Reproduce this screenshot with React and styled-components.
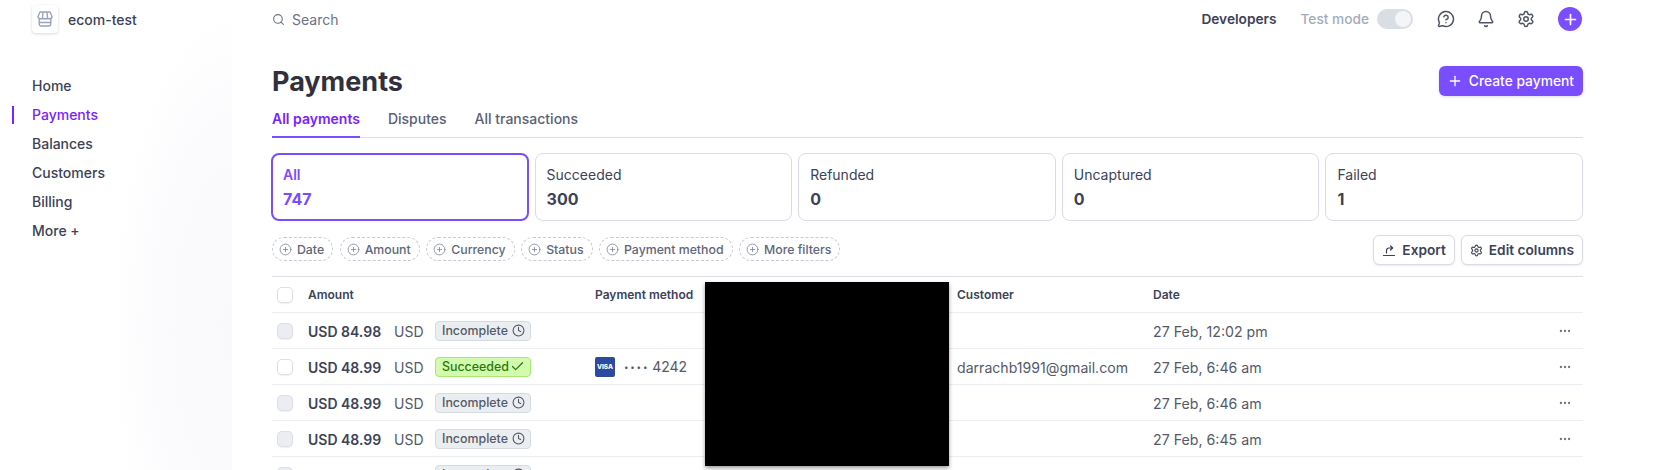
import React from "react";
import styled, { createGlobalStyle } from "styled-components";
import { Search, MessageCircleQuestion, Bell, Settings, Plus, CirclePlus, Clock, Check, Ellipsis } from "lucide-react";

const Global = createGlobalStyle`
  html, body {
    margin: 0;
    height: 470px;
    overflow: hidden;
    background: #fff;
    font-family: Inter, "Noto Sans", sans-serif;
    color: #3c4257;
    -webkit-font-smoothing: antialiased;
  }
`;

const Page = styled.div`
  display: grid;
  grid-template-columns: 232px 1351px;
  height: 470px;
  overflow: hidden;
`;

const Sidebar = styled.aside`
  height: 470px;
  background: radial-gradient(ellipse 120px 320px at 100% 70%, #f9f9fc 0%, #fafafd 50%, #ffffff 100%);
`;

const Brand = styled.div`
  display: flex;
  align-items: center;
  gap: 10px;
  padding: 5px 0 0 32px;
  height: 28px;
  font-size: 14px;
  font-weight: 500;
  color: #3c4257;
`;

const LogoBox = styled.div`
  width: 26px;
  height: 28px;
  display: flex;
  align-items: center;
  justify-content: center;
  border-radius: 4px;
  background: #fff;
  box-shadow: 0 1px 3px rgba(60, 66, 87, 0.2);
`;

const Nav = styled.nav`
  display: flex;
  flex-direction: column;
  gap: 9px;
  margin-top: 43px;
`;

const NavItem = styled.div`
  position: relative;
  padding-left: 32px;
  height: 20px;
  line-height: 20px;
  font-size: 14px;
  font-weight: 500;
  color: ${(p) => (p.$active ? "#7a22ff" : "#3c4257")};

  ${(p) =>
    p.$active &&
    `&::before {
      content: "";
      position: absolute;
      left: 12px;
      top: 1px;
      width: 2px;
      height: 18px;
      background: #7a22ff;
    }`}
`;

const Main = styled.main`
  padding-left: 40px;
  min-width: 0;
`;

const TopBar = styled.header`
  display: flex;
  align-items: center;
  height: 38px;
  font-size: 14px;
  padding-right: 1px;
`;

const SearchBox = styled.div`
  display: flex;
  align-items: center;
  gap: 7px;
  color: #6a7288;
  font-weight: 400;
  margin-right: auto;
`;

const DevLink = styled.span`
  font-weight: 600;
  font-size: 13.7px;
  color: #3c4257;
  margin-right: 24px;
`;

const TestLabel = styled.span`
  font-weight: 500;
  font-size: 13.7px;
  color: #a3acb9;
  margin-right: 8px;
`;

const Toggle = styled.div`
  width: 36px;
  height: 20px;
  box-sizing: border-box;
  padding: 2px;
  border-radius: 10px;
  background: #d9dde4;
  display: flex;
  justify-content: flex-end;
  margin-right: 24px;

  &::after {
    content: "";
    width: 16px;
    height: 16px;
    border-radius: 50%;
    background: #f4f5f8;
  }
`;

const IconRow = styled.div`
  display: flex;
  align-items: center;
  gap: 22px;
  color: #4f5566;
`;

const AddCircle = styled.div`
  width: 24px;
  height: 24px;
  margin-left: 1px;
  border-radius: 50%;
  background: #7a4dff;
  color: #fff;
  display: flex;
  align-items: center;
  justify-content: center;
`;

const TitleRow = styled.div`
  display: flex;
  align-items: center;
  justify-content: space-between;
  margin-top: 24px;
  height: 38px;
`;

const Title = styled.h1`
  margin: 0;
  padding-top: 2px;
  font-size: 27px;
  line-height: 36px;
  font-weight: 700;
  color: #30313d;
`;

const PrimaryButton = styled.button`
  display: flex;
  align-items: center;
  gap: 6px;
  height: 30px;
  padding: 0 9px 0 8px;
  border: 0;
  border-radius: 6px;
  background: #7a4dff;
  color: #fff;
  font: 500 13.8px Inter, sans-serif;
  box-shadow: 0 1px 3px rgba(60, 66, 87, 0.18);
`;

const Tabs = styled.div`
  display: flex;
  gap: 28px;
  margin-top: 6px;
  border-bottom: 1px solid #dcdfe8;
`;

const Tab = styled.div`
  height: 32px;
  box-sizing: border-box;
  line-height: 25px;
  font-size: 14px;
  font-weight: ${(p) => (p.$active ? 600 : 500)};
  color: ${(p) => (p.$active ? "#7a22ff" : "#5a6175")};
  margin-bottom: -1px;
  border-bottom: ${(p) => (p.$active ? "2px solid #7a4dff" : "0")};
`;

const Cards = styled.div`
  display: grid;
  grid-template-columns: repeat(5, 1fr);
  gap: 6px;
  margin-top: 15px;
  margin-left: -1px;
`;

const Card = styled.div`
  height: 68px;
  box-sizing: border-box;
  padding: ${(p) => (p.$active ? "10px 10px" : "11px 11px")};
  border-radius: 8px;
  border: ${(p) => (p.$active ? "2px solid #7a4dff" : "1px solid #d9dce5")};
  color: ${(p) => (p.$active ? "#7a4dff" : "#3c4257")};
`;

const CardLabel = styled.div`
  font-size: 14px;
  line-height: 20px;
  font-weight: ${(p) => (p.$active ? 600 : 400)};
`;

const CardValue = styled.div`
  margin-top: 2px;
  font-size: 16px;
  line-height: 24px;
  font-weight: 700;
`;

const FilterRow = styled.div`
  display: flex;
  align-items: center;
  justify-content: space-between;
  margin-top: 14px;
  height: 30px;
`;

const Filters = styled.div`
  display: flex;
  gap: 6.5px;
  padding-bottom: 2px;
`;

const Filter = styled.div`
  display: flex;
  align-items: center;
  gap: 5px;
  height: 24px;
  box-sizing: border-box;
  padding: 0 8px 0 6px;
  border: 1px dashed #c6cad6;
  border-radius: 12px;
  font-size: 12.3px;
  font-weight: 500;
  color: #5f667a;

  svg {
    color: #7d8499;
  }
`;

const Actions = styled.div`
  display: flex;
  gap: 6px;
`;

const GhostButton = styled.button`
  display: flex;
  align-items: center;
  gap: 6px;
  height: 30px;
  padding: 0 8px;
  background: #fff;
  border: 1px solid #d9dce5;
  border-radius: 6px;
  font: 600 13.7px Inter, sans-serif;
  color: #3c4257;
  box-shadow: 0 1px 2px rgba(60, 66, 87, 0.1);
`;

const Table = styled.div`
  position: relative;
  margin-top: 11px;
  border-top: 1px solid #dcdfe8;
`;

const Row = styled.div`
  display: grid;
  grid-template-columns: 36px 287px 362px 196px 1fr;
  align-items: center;
  height: 36px;
  box-sizing: border-box;
  border-bottom: 1px solid #ebedf2;
  font-size: 14px;
  color: #545969;
`;

const HeadCell = styled.div`
  font-size: 12px;
  font-weight: 600;
  color: #3c4257;
`;

const CheckBox = styled.div`
  width: 14px;
  height: 14px;
  margin-left: 6px;
  border-radius: 4px;
  background: ${(p) => (p.$muted ? "#ebedf2" : "#fff")};
  box-shadow: 0 0 0 1px #dcdfe8, 0 1px 1px 1px rgba(60, 66, 87, 0.08);
`;

const AmountCell = styled.div`
  display: flex;
  align-items: center;
`;

const Amount = styled.span`
  width: 86px;
  padding-top: 2px;
  font-weight: 600;
  color: #3c4257;
`;

const Currency = styled.span`
  width: 41px;
  padding-top: 2px;
`;

const Badge = styled.span`
  display: inline-flex;
  align-items: center;
  justify-content: space-between;
  width: 96px;
  height: 20px;
  box-sizing: border-box;
  padding: 0 5px 0 6px;
  border-radius: 4px;
  font-size: 12.4px;
  font-weight: 500;
  background: ${(p) => (p.$ok ? "#d3fbb0" : "#ebeef1")};
  color: ${(p) => (p.$ok ? "#2a7a05" : "#545969")};
  border: 1px solid ${(p) => (p.$ok ? "#a8e86f" : "#d5dbe1")};
`;

const MethodCell = styled.div`
  display: flex;
  align-items: center;
  gap: 9px;
`;

const VisaMark = styled.span`
  width: 20px;
  height: 20px;
  border-radius: 2px;
  background: #2c4a9e;
  color: #fff;
  display: flex;
  align-items: center;
  justify-content: center;
  font-size: 6.5px;
  font-weight: 800;
`;

const CardNumber = styled.span`
  display: flex;
  align-items: center;
  gap: 3px;
`;

const Dots = styled.span`
  font-size: 8px;
  letter-spacing: 1.8px;
`;

const CustomerCell = styled.div`
  padding-top: 2px;
  font-size: 14.1px;
`;

const DateCell = styled.div`
  display: flex;
  align-items: center;
  justify-content: space-between;
  padding-right: 11px;
`;

const DateText = styled.span`
  padding-top: 2px;
  font-size: 14.2px;
`;

const MoreIcon = styled(Ellipsis)`
  color: #6a7288;
`;

const Redaction = styled.div`
  position: absolute;
  left: 433px;
  top: 5px;
  width: 244px;
  height: 184px;
  background: #000;
  box-shadow: 0 2px 4px rgba(0, 0, 0, 0.4);
`;

const StoreIcon = () => (
  <svg width="18" height="18" viewBox="0 0 18 18" fill="none" stroke="#9aa3ba" strokeWidth="1.4" strokeLinejoin="round">
    <path d="M4 2h10l2 4.5a2 2 0 0 1-2 2.2H4a2 2 0 0 1-2-2.2L4 2z" />
    <path d="M7 2 6.4 8.7M11 2l.6 6.7" />
    <path d="M3.2 8.7V14a2 2 0 0 0 2 2h7.6a2 2 0 0 0 2-2V8.7M3.2 12.5h11.6" />
  </svg>
);

const ExportIcon = () => (
  <svg width="14" height="14" viewBox="0 0 14 14" fill="none" stroke="#3c4257" strokeWidth="1.2" strokeLinecap="round" strokeLinejoin="round">
    <path d="M1.5 12.5h11" />
    <path d="M4.5 10V7.5A2.5 2.5 0 0 1 7 5h3.5M8.5 3l2.2 2-2.2 2" />
  </svg>
);

const navItems = ["Home", "Payments", "Balances", "Customers", "Billing", "More +"];
const tabs = ["All payments", "Disputes", "All transactions"];
const summary = [
  { label: "All", value: "747" },
  { label: "Succeeded", value: "300" },
  { label: "Refunded", value: "0" },
  { label: "Uncaptured", value: "0" },
  { label: "Failed", value: "1" },
];
const filters = ["Date", "Amount", "Currency", "Status", "Payment method", "More filters"];
const payments = [
  { amount: "USD 84.98", date: "27 Feb, 12:02 pm" },
  { amount: "USD 48.99", date: "27 Feb, 6:46 am", ok: true, customer: "darrachb1991@gmail.com" },
  { amount: "USD 48.99", date: "27 Feb, 6:46 am" },
  { amount: "USD 48.99", date: "27 Feb, 6:45 am" },
  { amount: "USD 48.99", date: "27 Feb, 6:45 am" },
];

export default function App() {
  return (
    <Page>
      <Global />
      <Sidebar>
        <Brand>
          <LogoBox>
            <StoreIcon />
          </LogoBox>
          ecom-test
        </Brand>
        <Nav>
          {navItems.map((item) => (
            <NavItem key={item} $active={item === "Payments"}>
              {item}
            </NavItem>
          ))}
        </Nav>
      </Sidebar>

      <Main>
        <TopBar>
          <SearchBox>
            <Search size={13} />
            Search
          </SearchBox>
          <DevLink>Developers</DevLink>
          <TestLabel>Test mode</TestLabel>
          <Toggle />
          <IconRow>
            <MessageCircleQuestion size={18} />
            <Bell size={18} />
            <Settings size={18} />
            <AddCircle>
              <Plus size={17} strokeWidth={2.4} />
            </AddCircle>
          </IconRow>
        </TopBar>

        <TitleRow>
          <Title>Payments</Title>
          <PrimaryButton>
            <Plus size={16} />
            Create payment
          </PrimaryButton>
        </TitleRow>

        <Tabs>
          {tabs.map((tab, i) => (
            <Tab key={tab} $active={i === 0}>
              {tab}
            </Tab>
          ))}
        </Tabs>

        <Cards>
          {summary.map((card, i) => (
            <Card key={card.label} $active={i === 0}>
              <CardLabel $active={i === 0}>{card.label}</CardLabel>
              <CardValue>{card.value}</CardValue>
            </Card>
          ))}
        </Cards>

        <FilterRow>
          <Filters>
            {filters.map((f) => (
              <Filter key={f}>
                <CirclePlus size={13} strokeWidth={1.5} />
                {f}
              </Filter>
            ))}
          </Filters>
          <Actions>
            <GhostButton>
              <ExportIcon />
              Export
            </GhostButton>
            <GhostButton>
              <Settings size={13} />
              Edit columns
            </GhostButton>
          </Actions>
        </FilterRow>

        <Table>
          <Row>
            <CheckBox />
            <HeadCell>Amount</HeadCell>
            <HeadCell>Payment method</HeadCell>
            <HeadCell>Customer</HeadCell>
            <HeadCell>Date</HeadCell>
          </Row>
          {payments.map((p, i) => (
            <Row key={i}>
              <CheckBox $muted={!p.ok} />
              <AmountCell>
                <Amount>{p.amount}</Amount>
                <Currency>USD</Currency>
                <Badge $ok={p.ok}>
                  {p.ok ? "Succeeded" : "Incomplete"}
                  {p.ok ? <Check size={15} strokeWidth={2} /> : <Clock size={13} strokeWidth={2} />}
                </Badge>
              </AmountCell>
              <MethodCell>
                {p.ok && (
                  <>
                    <VisaMark>VISA</VisaMark>
                    <CardNumber>
                      <Dots>••••</Dots>
                      4242
                    </CardNumber>
                  </>
                )}
              </MethodCell>
              <CustomerCell>{p.customer}</CustomerCell>
              <DateCell>
                <DateText>{p.date}</DateText>
                <MoreIcon size={14} />
              </DateCell>
            </Row>
          ))}
          <Redaction />
        </Table>
      </Main>
    </Page>
  );
}
